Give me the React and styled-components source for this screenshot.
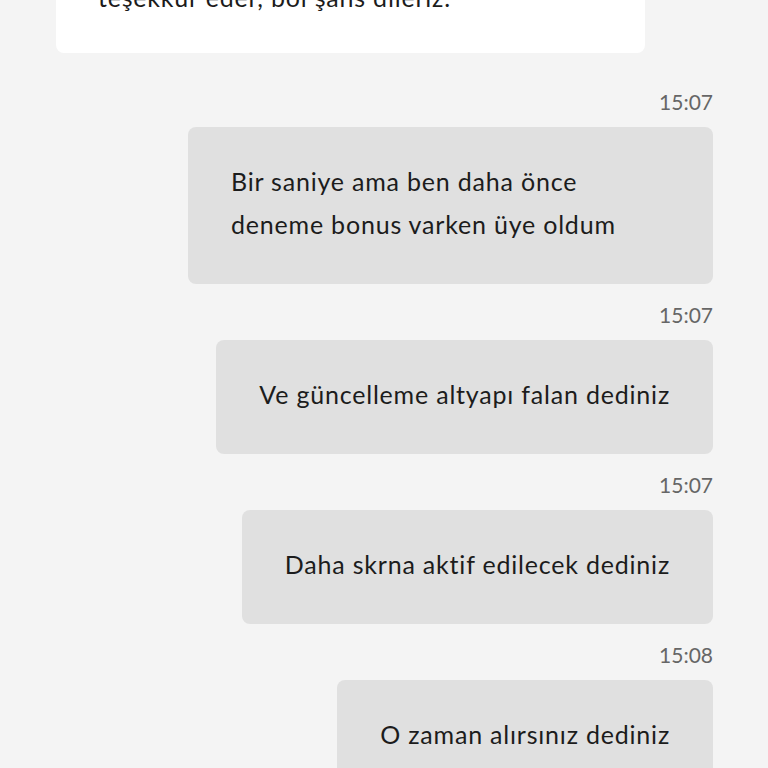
import styled, { createGlobalStyle } from "styled-components";

const GlobalStyle = createGlobalStyle`
  body {
    margin: 0;
    background: #f4f4f4;
    font-family: Lato, "Noto Sans", sans-serif;
    overflow: hidden;
  }
`;

const Thread = styled.div`
  display: flex;
  flex-direction: column;
  padding: 0 55px 0 56px;
  height: 768px;
  overflow: hidden;
`;

const AgentCard = styled.div`
  align-self: flex-start;
  width: 589px;
  box-sizing: border-box;
  margin-top: -58px;
  padding: 34px 42px 34px;
  background: #ffffff;
  border-radius: 8px;
  color: #1c1c1c;
  font-size: 25px;
  line-height: 43px;
  letter-spacing: 0.8px;
`;

const Group = styled.div`
  display: flex;
  flex-direction: column;
  align-items: flex-end;
  margin-top: ${({ first }) => (first ? "37px" : "19px")};
`;

const Time = styled.div`
  font-size: 21px;
  line-height: 24px;
  color: #666666;
  margin-bottom: 13px;
`;

const Bubble = styled.div`
  max-width: 525px;
  box-sizing: border-box;
  padding: 33px 43px 38px;
  background: #e0e0e0;
  border-radius: 8px;
  color: #1c1c1c;
  font-size: 25px;
  line-height: 43px;
  letter-spacing: 0.8px;
`;

const messages = [
  { time: "15:07", text: "Bir saniye ama ben daha önce deneme bonus varken üye oldum" },
  { time: "15:07", text: "Ve güncelleme altyapı falan dediniz" },
  { time: "15:07", text: "Daha skrna aktif edilecek dediniz" },
  { time: "15:08", text: "O zaman alırsınız dediniz" },
];

export default function App() {
  return (
    <>
      <GlobalStyle />
      <Thread>
        <AgentCard>teşekkür eder, bol şans dileriz.</AgentCard>
        {messages.map((m, i) => (
          <Group key={i} first={i === 0}>
            <Time>{m.time}</Time>
            <Bubble>{m.text}</Bubble>
          </Group>
        ))}
      </Thread>
    </>
  );
}
